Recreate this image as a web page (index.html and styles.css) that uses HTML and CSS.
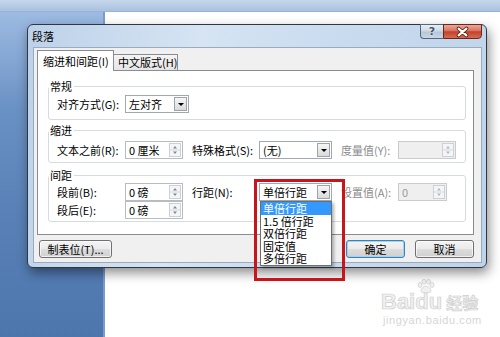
FILE: index.html
```html
<!DOCTYPE html>
<html lang="zh-CN">
<head>
    <meta charset="UTF-8">
    <title>段落</title>
    <link rel="stylesheet" href="styles.css">
</head>
<body>
    <div class="desktop">
        <div class="ruler"></div>
        <div class="workspace">
            <div class="sidebar"></div>
            <div class="page"></div>
        </div>
    </div>

    <div class="watermark">
        <div class="wm-logo">
            <span>Bai</span>
            <span class="wm-du">du
                <svg class="paw" viewBox="0 0 18 14" width="18" height="14">
                    <ellipse cx="3" cy="6" rx="2" ry="2.6"/>
                    <ellipse cx="7" cy="2.8" rx="2" ry="2.5"/>
                    <ellipse cx="11.5" cy="2.8" rx="2" ry="2.5"/>
                    <ellipse cx="15" cy="6" rx="2" ry="2.6"/>
                    <path d="M9 7c-3 0-5 3-5 5s2 1.5 5 1.5 5 .5 5-1.5-2-5-5-5z"/>
                </svg>
            </span>
            <span class="wm-cn">经验</span>
        </div>
        <div class="wm-url">jingyan.baidu.com</div>
    </div>

    <div class="dialog">
        <div class="titlebar">
            <span class="title">段落</span>
            <div class="caption">
                <span class="cap-help">?</span>
                <span class="cap-close">
                    <svg viewBox="0 0 38 14" width="38" height="14">
                        <path d="M15 3.5l8 7M23 3.5l-8 7" stroke="#5b1c12" stroke-width="4" stroke-linecap="round"/>
                        <path d="M15 3.5l8 7M23 3.5l-8 7" stroke="#fff" stroke-width="2.2" stroke-linecap="round"/>
                    </svg>
                </span>
            </div>
        </div>

        <div class="client">
            <div class="tabs">
                <div class="tab active">缩进和间距(I)</div>
                <div class="tab">中文版式(H)</div>
            </div>

            <div class="panel">
                <fieldset class="group g1">
                    <legend>常规</legend>
                    <div class="row">
                        <label>对齐方式(G):</label>
                        <div class="combo w64"><span>左对齐</span><i class="drop"></i></div>
                    </div>
                </fieldset>

                <fieldset class="group g2">
                    <legend>缩进</legend>
                    <div class="row">
                        <label>文本之前(R):</label>
                        <div class="spin">
                            <span class="val">0 厘米</span>
                            <svg class="updown" viewBox="0 0 12 14" width="12" height="14"><rect x=".5" y=".5" width="11" height="13"/><path class="sep" d="M1 7h10"/><path class="arr" d="M4 5.5h4L6 3z M4 8.5h4L6 11z"/></svg>
                        </div>
                        <label>特殊格式(S):</label>
                        <div class="combo w73"><span>(无)</span><i class="drop"></i></div>
                        <label class="off">度量值(Y):</label>
                        <div class="spin off">
                            <span class="val"></span>
                            <svg class="updown" viewBox="0 0 12 14" width="12" height="14"><rect x=".5" y=".5" width="11" height="13"/><path class="sep" d="M1 7h10"/><path class="arr" d="M4 5.5h4L6 3z M4 8.5h4L6 11z"/></svg>
                        </div>
                    </div>
                </fieldset>

                <fieldset class="group g3">
                    <legend>间距</legend>
                    <div class="row">
                        <label>段前(B):</label>
                        <div class="spin">
                            <span class="val">0 磅</span>
                            <svg class="updown" viewBox="0 0 12 14" width="12" height="14"><rect x=".5" y=".5" width="11" height="13"/><path class="sep" d="M1 7h10"/><path class="arr" d="M4 5.5h4L6 3z M4 8.5h4L6 11z"/></svg>
                        </div>
                        <label>行距(N):</label>
                        <div class="combo w73 open">
                            <span>单倍行距</span><i class="drop"></i>
                            <ul class="list">
                                <li class="sel">单倍行距</li>
                                <li>1.5 倍行距</li>
                                <li>双倍行距</li>
                                <li>固定值</li>
                                <li>多倍行距</li>
                            </ul>
                            <div class="mark"></div>
                        </div>
                        <label class="off">设置值(A):</label>
                        <div class="spin off short">
                            <span class="val">0</span>
                            <svg class="updown" viewBox="0 0 12 14" width="12" height="14"><rect x=".5" y=".5" width="11" height="13"/><path class="sep" d="M1 7h10"/><path class="arr" d="M4 5.5h4L6 3z M4 8.5h4L6 11z"/></svg>
                        </div>
                    </div>
                    <div class="row">
                        <label>段后(E):</label>
                        <div class="spin">
                            <span class="val">0 磅</span>
                            <svg class="updown" viewBox="0 0 12 14" width="12" height="14"><rect x=".5" y=".5" width="11" height="13"/><path class="sep" d="M1 7h10"/><path class="arr" d="M4 5.5h4L6 3z M4 8.5h4L6 11z"/></svg>
                        </div>
                    </div>
                </fieldset>
            </div>

            <div class="footer">
                <button class="btn tabstops">制表位(T)...</button>
                <button class="btn default">确定</button>
                <button class="btn">取消</button>
            </div>
        </div>
    </div>
</body>
</html>
```

FILE: styles.css
```css
* {
    box-sizing: border-box;
}

body {
    margin: 0;
    width: 500px;
    height: 337px;
    overflow: hidden;
    position: relative;
    font-family: "Noto Sans CJK SC", "Noto Sans", sans-serif;
    font-size: 11px;
    color: #000;
}

/* background: word window behind the dialog */
.desktop {
    height: 337px;
    display: flex;
    flex-direction: column;
}

.ruler {
    height: 12px;
    background: linear-gradient(#c6d7ec, #a9c1df);
    border-bottom: 1px solid #9ab3d3;
}

.workspace {
    flex: 1;
    display: flex;
}

.sidebar {
    width: 105px;
    background: linear-gradient(#9dbbe2, #6a91c4 30%, #5a82b8 60%, #4d76ad);
    border-right: 2px solid #7b9ccb;
}

.page {
    flex: 1;
    background: #fff;
}

/* watermark */
.watermark {
    position: absolute;
    left: 381px;
    top: 290px;
    color: #f0f0f0;
    -webkit-text-stroke: 0.7px #cfcfcf;
}

.wm-logo {
    display: flex;
    align-items: baseline;
    font-family: "Liberation Sans", sans-serif;
    font-weight: bold;
    font-size: 22px;
    line-height: 24px;
}

.wm-du {
    position: relative;
}

.paw {
    position: absolute;
    left: 2px;
    top: -11px;
    fill: #f0f0f0;
    stroke: #cfcfcf;
    stroke-width: 0.7;
}

.wm-cn {
    margin-left: 4px;
    font-family: "Noto Sans CJK SC", sans-serif;
    font-size: 16px;
}

.wm-url {
    font-family: "Liberation Sans", sans-serif;
    font-size: 11px;
    line-height: 13px;
    margin-left: 2px;
    -webkit-text-stroke: 0;
    color: #d6d6d6;
    letter-spacing: 0.6px;
}

/* dialog window */
.dialog {
    position: absolute;
    left: 27px;
    top: 24px;
    width: 460px;
    height: 244px;
    border: 1px solid #2f3740;
    border-radius: 6px;
    padding: 0 4px 4px 5px;
    background: linear-gradient(100deg, #bcd1e9 0%, #d6e4f3 35%, #cadcef 60%, #bed3ea 100%);
    box-shadow: 2px 5px 12px rgba(0, 0, 0, 0.45);
    display: flex;
    flex-direction: column;
}

.titlebar {
    height: 22px;
    display: flex;
    justify-content: space-between;
    align-items: flex-start;
}

.title {
    line-height: 22px;
    margin-left: -1px;
}

.caption {
    display: flex;
    margin-top: -1px;
}

.cap-help {
    width: 23px;
    height: 15px;
    border: 1px solid #56667a;
    border-right: none;
    border-radius: 0 0 0 4px;
    background: linear-gradient(#e6edf5, #cdd8e4 48%, #b6c6d8 52%, #c9d7e7);
    display: flex;
    justify-content: center;
    align-items: center;
    font-family: "DejaVu Sans", sans-serif;
    font-weight: bold;
    font-size: 11px;
    color: #44546a;
    text-shadow: 0 0 2px #fff;
}

.cap-close {
    width: 39px;
    height: 15px;
    border: 1px solid #6b271c;
    border-radius: 0 0 4px 0;
    background: linear-gradient(#eaa89a, #d9735f 45%, #c4412b 52%, #d46c52);
    display: flex;
}

.client {
    flex: 1;
    background: #f0f0f0;
    border: 1px solid #9aabbf;
    padding: 2px 7px 4px 3px;
    display: flex;
    flex-direction: column;
}

/* tabs */
.tabs {
    height: 20px;
    display: flex;
    align-items: flex-end;
}

.tab {
    height: 16px;
    width: 64px;
    padding-left: 4px;
    border: 1px solid #898c95;
    border-bottom: none;
    border-left: none;
    background: linear-gradient(#f4f4f4, #e6e6e6);
    line-height: 15px;
    white-space: nowrap;
}

.tab.active {
    position: relative;
    z-index: 1;
    height: 21px;
    width: 77px;
    margin-bottom: -1px;
    padding-left: 5px;
    border-left: 1px solid #898c95;
    background: #fff;
    line-height: 20px;
}

.panel {
    height: 165px;
    border: 1px solid #898c95;
    background: #fff;
    padding-top: 9px;
}

/* group boxes */
.group {
    border: 1px solid #d5dbe1;
    border-radius: 3px;
    margin: 0 7px 0 10px;
    padding: 0 0 0 8px;
    min-width: 0;
}

.group legend {
    padding: 0 2px 0 1px;
    margin-left: -8px;
    line-height: 13px;
}

.g1 {
    padding-top: 2px;
    padding-bottom: 6px;
}

.g2 {
    margin-top: 4px;
    padding-top: 4px;
    padding-bottom: 3px;
}

.g3 {
    margin-top: 6px;
    padding-top: 1px;
    padding-bottom: 2px;
}

.row {
    display: grid;
    grid-template-columns: 68px 67px 67px 82px 57px 1fr;
    height: 18px;
    align-items: center;
}

.row label {
    white-space: nowrap;
}

.row label.off {
    color: #8c8c8c;
}

/* spin box */
.spin {
    width: 58px;
    height: 18px;
    border: 1px solid #b7bcc3;
    background: #fff;
    display: flex;
    align-items: center;
    padding-left: 3px;
}

.spin .val {
    flex: 1;
    white-space: nowrap;
}

.updown {
    margin-right: 1px;
}

.updown rect {
    fill: #f4f5f7;
    stroke: #cdd1d6;
}

.updown .sep {
    stroke: #d6d9dd;
}

.updown .arr {
    fill: #7f8893;
}

.spin.off {
    background: #efefef;
    border-color: #cbcbcb;
    color: #9a9a9a;
}

.spin.off .updown .arr {
    fill: #b4b8bd;
}

.spin.short {
    width: 49px;
}

/* combo box */
.combo {
    position: relative;
    height: 18px;
    border: 1px solid #a2a8b0;
    background: #fff;
    display: flex;
    align-items: center;
    padding-left: 3px;
    white-space: nowrap;
}

.w64 {
    width: 64px;
}

.w73 {
    width: 73px;
}

.drop {
    margin-left: auto;
    margin-right: 1px;
    width: 13px;
    height: 14px;
    border: 1px solid #9da3ab;
    background: linear-gradient(#f6f6f6, #dadada);
    display: flex;
    align-items: center;
    justify-content: center;
}

.drop::after {
    content: "";
    border-left: 3px solid transparent;
    border-right: 3px solid transparent;
    border-top: 3px solid #000;
}

.list {
    position: absolute;
    left: 0;
    top: 17px;
    width: 72px;
    margin: 0;
    padding: 0;
    list-style: none;
    background: #fff;
    border: 1px solid #6e6e6e;
    box-shadow: 2px 2px 3px rgba(0, 0, 0, 0.3);
    z-index: 2;
}

.list li {
    height: 12.6px;
    line-height: 12.6px;
    padding-left: 2px;
}

.list li.sel {
    background: #3399ff;
    color: #fff;
}

.mark {
    position: absolute;
    left: -6px;
    top: -5px;
    width: 91px;
    height: 102px;
    border: 3px solid #c8151c;
    z-index: 3;
}

/* bottom buttons */
.footer {
    margin-top: 5px;
    display: flex;
    gap: 10px;
    padding-left: 2px;
}

.btn {
    height: 18px;
    width: 59px;
    padding: 0;
    border: 1px solid #707070;
    border-radius: 3px;
    background: linear-gradient(#f3f3f3, #ebebeb 48%, #dcdcdc 52%, #d0d0d0);
    box-shadow: inset 0 0 0 1px rgba(255, 255, 255, 0.7);
    font-family: inherit;
    font-size: 11px;
    line-height: 16px;
    color: #000;
}

.btn.tabstops {
    width: 73px;
    margin-right: auto;
}

.btn.default {
    border-color: #3d80b3;
    box-shadow: inset 0 0 0 1px #9fd5f0;
}
```
